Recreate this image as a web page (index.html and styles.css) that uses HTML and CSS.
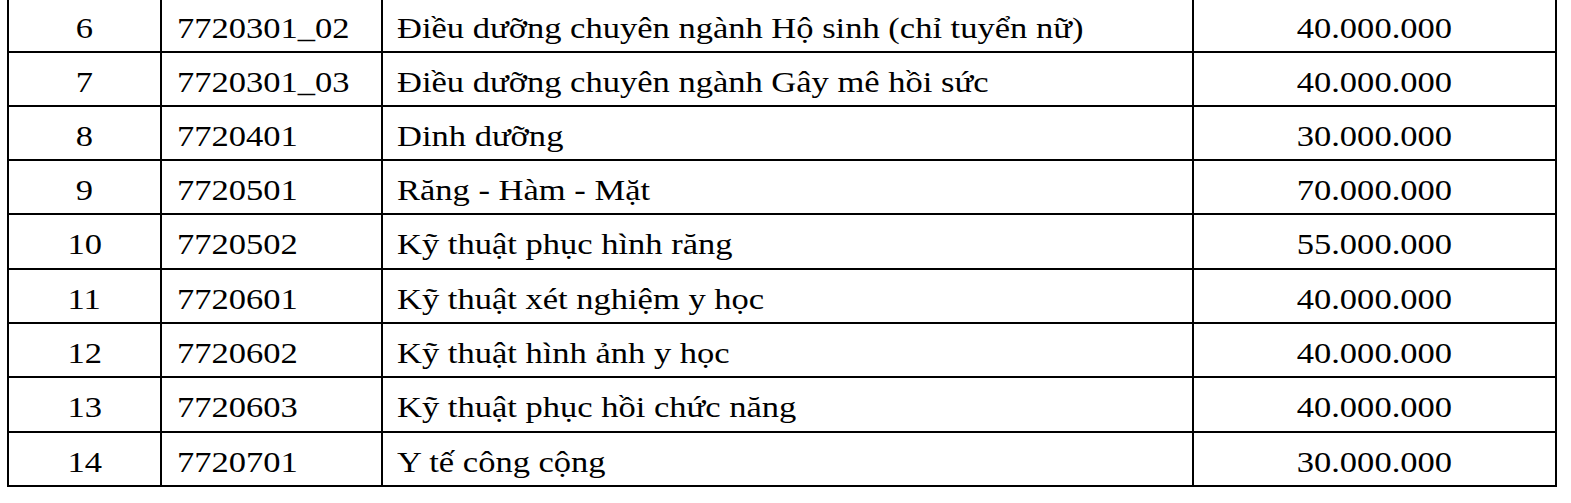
FILE: index.html
```html
<!DOCTYPE html>
<html lang="vi">
<head>
<meta charset="utf-8">
<title>Bảng học phí</title>
<link rel="stylesheet" href="styles.css">
</head>
<body>
<div class="table">
  <div class="cell c-no"><span class="t">6</span></div>
  <div class="cell c-code"><span class="t">7720301_02</span></div>
  <div class="cell c-name"><span class="t">Điều dưỡng chuyên ngành Hộ sinh (chỉ tuyển nữ)</span></div>
  <div class="cell c-fee"><span class="t">40.000.000</span></div>

  <div class="cell c-no"><span class="t">7</span></div>
  <div class="cell c-code"><span class="t">7720301_03</span></div>
  <div class="cell c-name"><span class="t">Điều dưỡng chuyên ngành Gây mê hồi sức</span></div>
  <div class="cell c-fee"><span class="t">40.000.000</span></div>

  <div class="cell c-no"><span class="t">8</span></div>
  <div class="cell c-code"><span class="t">7720401</span></div>
  <div class="cell c-name"><span class="t">Dinh dưỡng</span></div>
  <div class="cell c-fee"><span class="t">30.000.000</span></div>

  <div class="cell c-no"><span class="t">9</span></div>
  <div class="cell c-code"><span class="t">7720501</span></div>
  <div class="cell c-name"><span class="t">Răng - Hàm - Mặt</span></div>
  <div class="cell c-fee"><span class="t">70.000.000</span></div>

  <div class="cell c-no"><span class="t">10</span></div>
  <div class="cell c-code"><span class="t">7720502</span></div>
  <div class="cell c-name"><span class="t">Kỹ thuật phục hình răng</span></div>
  <div class="cell c-fee"><span class="t">55.000.000</span></div>

  <div class="cell c-no"><span class="t">11</span></div>
  <div class="cell c-code"><span class="t">7720601</span></div>
  <div class="cell c-name"><span class="t">Kỹ thuật xét nghiệm y học</span></div>
  <div class="cell c-fee"><span class="t">40.000.000</span></div>

  <div class="cell c-no"><span class="t">12</span></div>
  <div class="cell c-code"><span class="t">7720602</span></div>
  <div class="cell c-name"><span class="t">Kỹ thuật hình ảnh y học</span></div>
  <div class="cell c-fee"><span class="t">40.000.000</span></div>

  <div class="cell c-no"><span class="t">13</span></div>
  <div class="cell c-code"><span class="t">7720603</span></div>
  <div class="cell c-name"><span class="t">Kỹ thuật phục hồi chức năng</span></div>
  <div class="cell c-fee"><span class="t">40.000.000</span></div>

  <div class="cell c-no"><span class="t">14</span></div>
  <div class="cell c-code"><span class="t">7720701</span></div>
  <div class="cell c-name"><span class="t">Y tế công cộng</span></div>
  <div class="cell c-fee"><span class="t">30.000.000</span></div>
</div>
</body>
</html>
```

FILE: styles.css
```css
html, body {
  margin: 0;
  padding: 0;
  background: #fff;
}

body {
  font-family: "Liberation Serif", "Times New Roman", serif;
  color: #000;
  overflow: hidden;
}

.table {
  display: grid;
  grid-template-columns: 153px 221px 811px 363px;
  grid-template-rows: 54px 54px 54px 54px 55px 54px 54px 55px 54px;
  width: max-content;
  margin: -1px 0 0 7px;
  border-left: 2px solid #000;
}

.cell {
  box-sizing: border-box;
  border-right: 2px solid #000;
  border-bottom: 2px solid #000;
  padding-top: 12px;
  font-size: 29.5px;
  line-height: 34px;
  white-space: nowrap;
}

.t {
  display: inline-block;
  transform: scaleX(1.17);
}

.c-no,
.c-fee {
  text-align: center;
}

.c-no .t,
.c-fee .t {
  transform-origin: center;
}

.c-code {
  padding-left: 15px;
}

.c-name {
  padding-left: 14px;
}

.c-code .t,
.c-name .t {
  transform-origin: left center;
}
```
